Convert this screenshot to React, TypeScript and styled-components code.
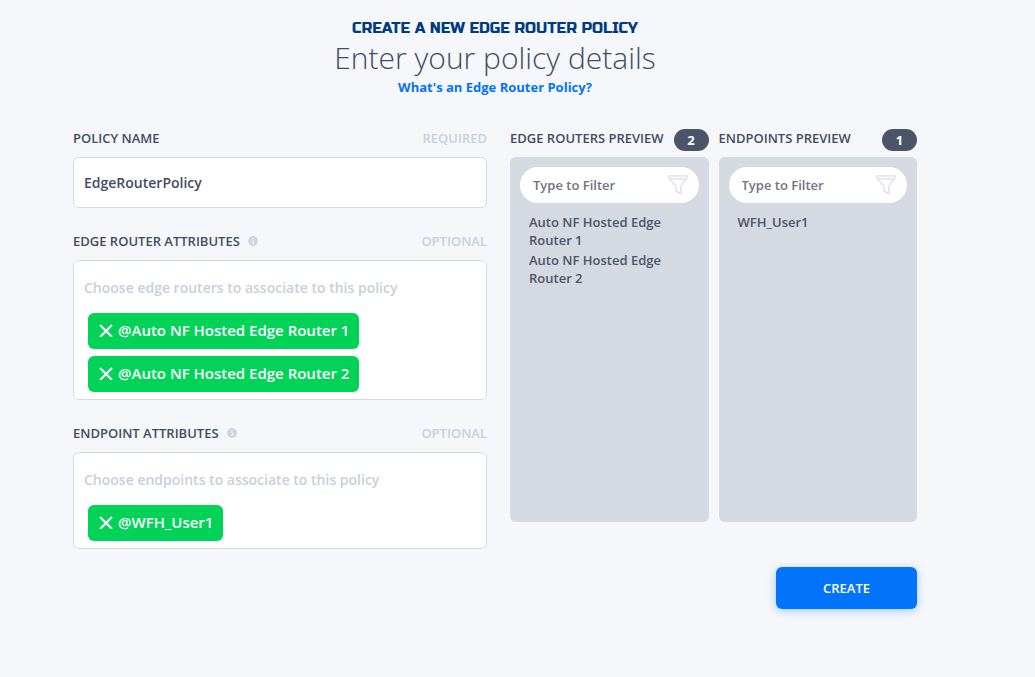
import React, { useState } from "react";
import styled, { createGlobalStyle } from "styled-components";

const GlobalStyle = createGlobalStyle`
  *, *::before, *::after { box-sizing: border-box; }
  body {
    margin: 0;
    background: #f5f7fb;
    color: #434c5e;
    font-family: "Open Sans", sans-serif;
    font-size: 13px;
    font-weight: 600;
  }
  input, button { font: inherit; color: inherit; }
`;

const Page = styled.main`
  padding: 18px 118px 40px 73px;
`;

const Header = styled.header`
  display: flex;
  flex-direction: column;
  align-items: center;
  margin-bottom: 31px;
`;

const Eyebrow = styled.h2`
  margin: 0;
  color: #003b82;
  font-family: "Russo One", Roboto, sans-serif;
  font-size: 15px;
  font-weight: 400;
  line-height: 20px;
  text-transform: uppercase;
`;

const Title = styled.h1`
  margin: 0;
  font-size: 30px;
  font-weight: 300;
  line-height: 40px;
`;

const HelpLink = styled.a`
  color: #0273fb;
  font-weight: 700;
  line-height: 18px;
  text-decoration: none;
`;

const Form = styled.form`
  display: grid;
  grid-template-columns: minmax(0, 414fr) minmax(0, 407fr);
  gap: 23px;
  align-items: start;
`;

const Fields = styled.div`
  display: flex;
  flex-direction: column;
  gap: 22px;
`;

const Field = styled.div`
  display: flex;
  flex-direction: column;
  gap: 8px;
`;

const FieldHead = styled.div`
  display: flex;
  align-items: center;
  justify-content: space-between;
  height: 22px;
`;

const Label = styled.label`
  display: flex;
  align-items: center;
  gap: 8px;
  white-space: nowrap;
  text-transform: uppercase;
`;

const Hint = styled.span`
  color: #c9cfdb;
  text-transform: uppercase;
`;

const TextInput = styled.input`
  width: 100%;
  height: 51px;
  padding: 0 10px;
  border: 1px solid #d5d9e2;
  border-radius: 6px;
  background: #fff;
  font-size: 14px;
`;

const TagBox = styled.div`
  padding: 16px 10px 7px;
  border: 1px solid #d5d9e2;
  border-radius: 6px;
  background: #fff;
`;

const TagInput = styled.input`
  display: block;
  width: 100%;
  height: 20px;
  padding: 0;
  border: 0;
  outline: 0;
  background: none;
  font-size: 14px;
  &::placeholder { color: #c9cfdb; opacity: 1; }
`;

const Tags = styled.div`
  display: flex;
  flex-direction: column;
  align-items: flex-start;
  gap: 7px;
  padding: 16px 4px 0;
`;

const Tag = styled.button`
  display: flex;
  align-items: center;
  gap: 5px;
  height: 36px;
  padding: 0 10px 2px 11px;
  border: 0;
  border-radius: 6px;
  background: #01d358;
  color: #fff;
  font-size: 15px;
  white-space: nowrap;
  cursor: pointer;
`;

const Side = styled.div`
  display: flex;
  flex-direction: column;
  gap: 45px;
`;

const Previews = styled.div`
  display: grid;
  grid-template-columns: repeat(2, minmax(0, 1fr));
  gap: 10px;
`;

const Preview = styled.section`
  display: flex;
  flex-direction: column;
  gap: 8px;
`;

const Badge = styled.span`
  flex: none;
  align-self: flex-end;
  width: 35px;
  margin-bottom: -2px;
  border-radius: 11px;
  background: #4c5567;
  color: #fff;
  font-weight: 700;
  line-height: 22px;
  text-align: center;
`;

const Panel = styled.div`
  min-height: 365px;
  padding: 10px;
  border-radius: 6px;
  background: #d5d9e2;
`;

const Search = styled.div`
  display: flex;
  align-items: center;
  height: 36px;
  padding: 0 11px 0 13px;
  border-radius: 18px;
  background: #fff;
`;

const SearchInput = styled.input`
  flex: 1;
  min-width: 0;
  padding: 0;
  border: 0;
  outline: 0;
  background: none;
  &::placeholder { color: #6f7480; opacity: 1; }
`;

const Items = styled.ul`
  display: flex;
  flex-direction: column;
  gap: 2px;
  margin: 10px 0 0;
  padding: 0 9px;
  list-style: none;
  color: #4c5567;
  line-height: 18px;
`;

const Submit = styled.button`
  align-self: flex-end;
  width: 141px;
  height: 42px;
  border: 0;
  border-radius: 6px;
  background: #0273fb;
  box-shadow: 0 2px 8px rgba(2, 115, 251, 0.35);
  color: #fff;
  text-transform: uppercase;
  cursor: pointer;
`;

const InfoIcon = () => (
  <svg width="10" height="10" viewBox="0 0 10 10" aria-hidden="true">
    <circle cx="5" cy="5" r="4.9" fill="#cfd4df" />
    <path d="M4.1 4.3h1.4v3M4 7.4h2.2" fill="none" stroke="#f5f7fb" strokeWidth="0.8" />
    <circle cx="5" cy="2.6" r="0.7" fill="#f5f7fb" />
  </svg>
);

const CrossIcon = () => (
  <svg width="14" height="14" viewBox="0 0 14 14" aria-hidden="true">
    <path d="M1 2l12 12M13 2l-12 12" stroke="#fff" strokeWidth="2.2" />
  </svg>
);

const FunnelIcon = () => (
  <svg width="20" height="20" viewBox="0 0 20 20" fill="none" stroke="#e6e5ee" strokeWidth="1.8" strokeLinejoin="round" aria-hidden="true">
    <path d="M1 .9h18v2.4L12.7 11v8.1L8 16v-5L1 3.3z" />
    <path d="M1.2 3.8h17.6" />
  </svg>
);

type TagFieldProps = { id: string; label: string; placeholder: string; initial: string[] };

function TagField({ id, label, placeholder, initial }: TagFieldProps) {
  const [tags, setTags] = useState(initial);
  return (
    <Field>
      <FieldHead>
        <Label htmlFor={id}>{label}<InfoIcon /></Label>
        <Hint>Optional</Hint>
      </FieldHead>
      <TagBox>
        <TagInput id={id} placeholder={placeholder} />
        <Tags>
          {tags.map((tag) => (
            <Tag key={tag} type="button" onClick={() => setTags(tags.filter((t) => t !== tag))}>
              <CrossIcon />@{tag}
            </Tag>
          ))}
        </Tags>
      </TagBox>
    </Field>
  );
}

function PreviewList({ id, label, items }: { id: string; label: string; items: string[] }) {
  const [query, setQuery] = useState("");
  const shown = items.filter((item) => item.toLowerCase().includes(query.toLowerCase()));
  return (
    <Preview>
      <FieldHead>
        <Label htmlFor={id}>{label}</Label>
        <Badge>{items.length}</Badge>
      </FieldHead>
      <Panel>
        <Search>
          <SearchInput id={id} placeholder="Type to Filter" value={query} onChange={(e) => setQuery(e.target.value)} />
          <FunnelIcon />
        </Search>
        <Items>{shown.map((item) => <li key={item}>{item}</li>)}</Items>
      </Panel>
    </Preview>
  );
}

const routers = ["Auto NF Hosted Edge Router 1", "Auto NF Hosted Edge Router 2"];
const endpoints = ["WFH_User1"];

export default function App() {
  return (
    <Page>
      <GlobalStyle />
      <Header>
        <Eyebrow>Create a new edge router policy</Eyebrow>
        <Title>Enter your policy details</Title>
        <HelpLink href="#help">What's an Edge Router Policy?</HelpLink>
      </Header>
      <Form onSubmit={(e) => e.preventDefault()}>
        <Fields>
          <Field>
            <FieldHead>
              <Label htmlFor="name">Policy name</Label>
              <Hint>Required</Hint>
            </FieldHead>
            <TextInput id="name" defaultValue="EdgeRouterPolicy" />
          </Field>
          <TagField id="routers" label="Edge router attributes" placeholder="Choose edge routers to associate to this policy" initial={routers} />
          <TagField id="endpoints" label="Endpoint attributes" placeholder="Choose endpoints to associate to this policy" initial={endpoints} />
        </Fields>
        <Side>
          <Previews>
            <PreviewList id="router-filter" label="Edge routers preview" items={routers} />
            <PreviewList id="endpoint-filter" label="Endpoints preview" items={endpoints} />
          </Previews>
          <Submit type="submit">Create</Submit>
        </Side>
      </Form>
    </Page>
  );
}
